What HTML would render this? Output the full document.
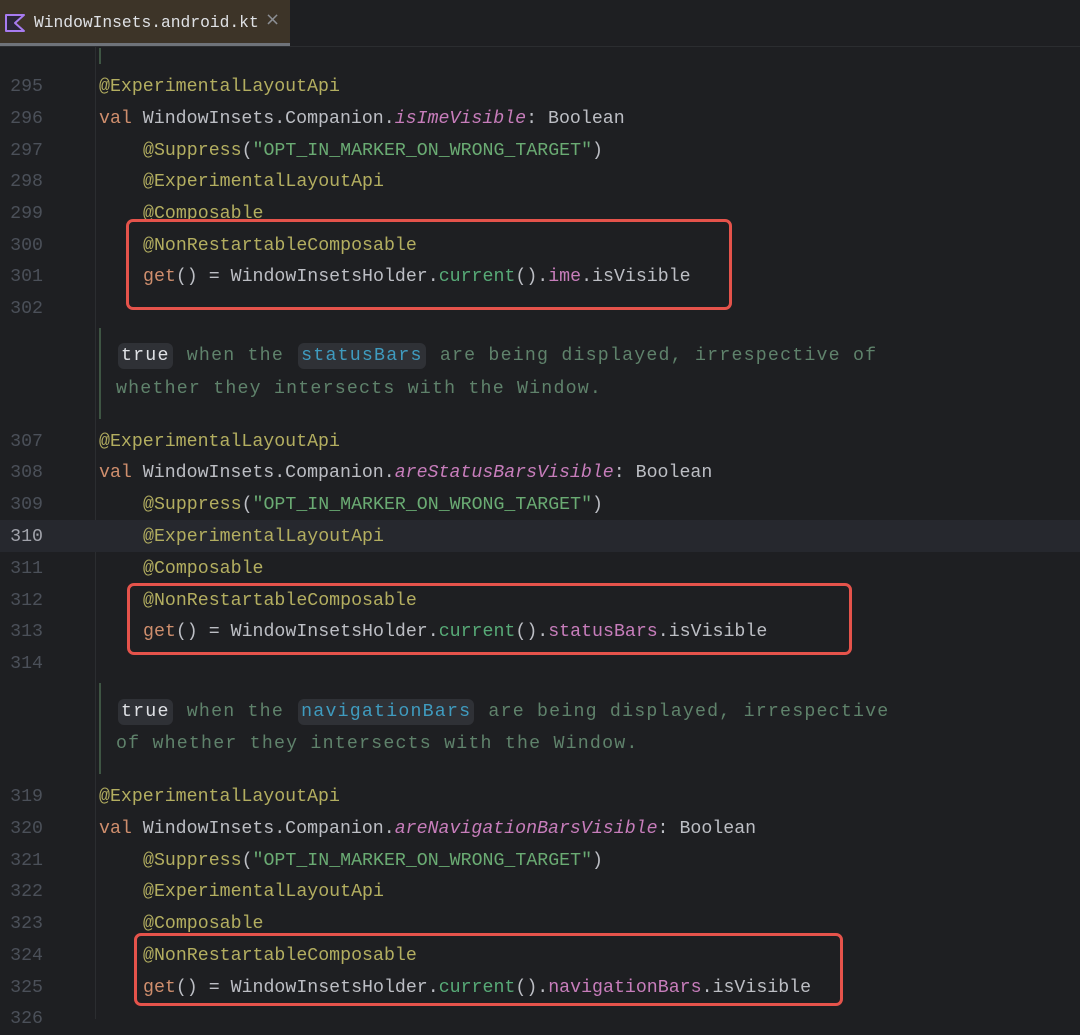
<!DOCTYPE html>
<html><head><meta charset="utf-8"><style>
*{margin:0;padding:0;box-sizing:border-box}
body{width:1080px;height:1019px;overflow:hidden;background:#1e1f22;font-family:"Liberation Mono",monospace;font-size:18.25px;color:#bcbec4;position:relative}
.tab{position:absolute;left:0;top:0;width:290px;height:43px;background:#3d3428}
.tabline{position:absolute;left:0;top:43px;width:290px;height:3px;background:#6f737a}
.sep{position:absolute;left:0;top:46px;width:1080px;height:1px;background:#2b2d30}
.tabtxt{position:absolute;left:34px;top:11px;font-size:16.3px;color:#dfe1e5;line-height:24px}
.x{position:absolute;left:265px;top:9px;color:#8c8f94;font-family:"DejaVu Sans",sans-serif;font-size:18px}
.gut{position:absolute;left:95px;top:47px;width:1px;height:972px;background:#2b2d30}
.ln{position:absolute;left:0;width:43px;text-align:right;color:#4b5059;height:32px;line-height:32px}
.c{position:absolute;white-space:pre;height:32px;line-height:32px}
.a{color:#b3ae60}.k{color:#cf8e6d}.p{color:#c77dbb;font-style:italic}.pp{color:#c77dbb}.s{color:#6aab73}.f{color:#57aa77}
.cur{position:absolute;left:0;top:520px;width:1080px;height:32px;background:#26282e}
.box{position:absolute;border:3px solid #e5534b;border-radius:7px}
.bar{position:absolute;left:99px;width:2px;background:#3e5543}
.doc{position:absolute;left:116px;white-space:pre;color:#5f826b;letter-spacing:1.2px;height:33px;line-height:33px}
.chip{display:inline-block;background:#2f3136;border-radius:6px;padding:0 3px;line-height:26px;margin-left:2px;margin-right:2px}
.t{color:#dfe1e5}.l{color:#3f9bbf}
</style></head><body>
<div class="tab"></div><div class="tabline"></div><div class="sep"></div>
<svg style="position:absolute;left:0;top:0" width="30" height="44"><polygon points="6,15 24,15 15,23 24,31 6,31" fill="#2a2638" stroke="#a77bf0" stroke-width="2" stroke-linejoin="round"/></svg>
<div class="tabtxt">WindowInsets.android.kt</div><div class="x">×</div>
<div class="gut"></div>
<div class="cur"></div>
<div style="position:absolute;left:99px;top:48px;width:2px;height:16px;background:#3e5543"></div>

<div class="ln" style="top:71px">295</div><div class="c a" style="left:99px;top:71px">@ExperimentalLayoutApi</div>
<div class="ln" style="top:103px">296</div><div class="c" style="left:99px;top:103px"><span class="k">val</span> WindowInsets.Companion.<span class="p">isImeVisible</span>: Boolean</div>
<div class="ln" style="top:135px">297</div><div class="c" style="left:143px;top:135px"><span class="a">@Suppress</span>(<span class="s">"OPT_IN_MARKER_ON_WRONG_TARGET"</span>)</div>
<div class="ln" style="top:166px">298</div><div class="c a" style="left:143px;top:166px">@ExperimentalLayoutApi</div>
<div class="ln" style="top:198px">299</div><div class="c a" style="left:143px;top:198px">@Composable</div>
<div class="ln" style="top:230px">300</div><div class="c a" style="left:143px;top:230px">@NonRestartableComposable</div>
<div class="ln" style="top:261px">301</div><div class="c" style="left:143px;top:261px"><span class="k">get</span>() = WindowInsetsHolder.<span class="f">current</span>().<span class="pp">ime</span>.isVisible</div>
<div class="ln" style="top:293px">302</div>
<div class="box" style="left:126px;top:219px;width:606px;height:91px"></div>

<div class="bar" style="top:328px;height:91px"></div>
<div class="doc" style="top:340px"><span class="chip t">true</span> when the <span class="chip l">statusBars</span> are being displayed, irrespective of</div>
<div class="doc" style="top:373px">whether they intersects with the Window.</div>

<div class="ln" style="top:426px">307</div><div class="c a" style="left:99px;top:426px">@ExperimentalLayoutApi</div>
<div class="ln" style="top:457px">308</div><div class="c" style="left:99px;top:457px"><span class="k">val</span> WindowInsets.Companion.<span class="p">areStatusBarsVisible</span>: Boolean</div>
<div class="ln" style="top:489px">309</div><div class="c" style="left:143px;top:489px"><span class="a">@Suppress</span>(<span class="s">"OPT_IN_MARKER_ON_WRONG_TARGET"</span>)</div>
<div class="ln" style="top:521px;color:#a1a3ab">310</div><div class="c a" style="left:143px;top:521px">@ExperimentalLayoutApi</div>
<div class="ln" style="top:553px">311</div><div class="c a" style="left:143px;top:553px">@Composable</div>
<div class="ln" style="top:585px">312</div><div class="c a" style="left:143px;top:585px">@NonRestartableComposable</div>
<div class="ln" style="top:616px">313</div><div class="c" style="left:143px;top:616px"><span class="k">get</span>() = WindowInsetsHolder.<span class="f">current</span>().<span class="pp">statusBars</span>.isVisible</div>
<div class="ln" style="top:648px">314</div>
<div class="box" style="left:127px;top:583px;width:725px;height:72px"></div>

<div class="bar" style="top:683px;height:91px"></div>
<div class="doc" style="top:696px"><span class="chip t">true</span> when the <span class="chip l">navigationBars</span> are being displayed, irrespective</div>
<div class="doc" style="top:728px">of whether they intersects with the Window.</div>

<div class="ln" style="top:781px">319</div><div class="c a" style="left:99px;top:781px">@ExperimentalLayoutApi</div>
<div class="ln" style="top:813px">320</div><div class="c" style="left:99px;top:813px"><span class="k">val</span> WindowInsets.Companion.<span class="p">areNavigationBarsVisible</span>: Boolean</div>
<div class="ln" style="top:845px">321</div><div class="c" style="left:143px;top:845px"><span class="a">@Suppress</span>(<span class="s">"OPT_IN_MARKER_ON_WRONG_TARGET"</span>)</div>
<div class="ln" style="top:876px">322</div><div class="c a" style="left:143px;top:876px">@ExperimentalLayoutApi</div>
<div class="ln" style="top:908px">323</div><div class="c a" style="left:143px;top:908px">@Composable</div>
<div class="ln" style="top:940px">324</div><div class="c a" style="left:143px;top:940px">@NonRestartableComposable</div>
<div class="ln" style="top:972px">325</div><div class="c" style="left:143px;top:972px"><span class="k">get</span>() = WindowInsetsHolder.<span class="f">current</span>().<span class="pp">navigationBars</span>.isVisible</div>
<div class="ln" style="top:1003px">326</div>
<div class="box" style="left:134px;top:933px;width:709px;height:73px"></div>
</body></html>
